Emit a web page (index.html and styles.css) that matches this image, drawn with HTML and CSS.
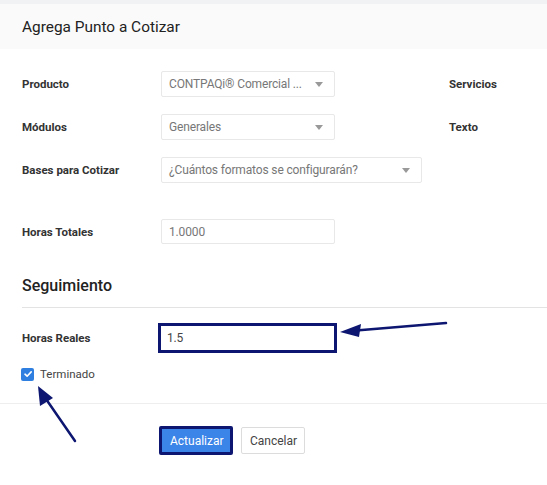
FILE: index.html
```html
<!DOCTYPE html>
<html lang="es">
<head>
<meta charset="utf-8">
<title>Agrega Punto a Cotizar</title>
<link rel="stylesheet" href="styles.css">
</head>
<body>
<div class="page">
  <div class="strip"></div>
  <div class="header"><h1 class="title">Agrega Punto a Cotizar</h1></div>
  <div class="form">
    <div class="row row-first">
      <div class="label">Producto</div>
      <div class="select w174"><span class="val">CONTPAQi® Comercial ...</span><span class="caret"></span></div>
      <div class="side-label">Servicios</div>
    </div>
    <div class="row">
      <div class="label">Módulos</div>
      <div class="select w174"><span class="val">Generales</span><span class="caret"></span></div>
      <div class="side-label">Texto</div>
    </div>
    <div class="row">
      <div class="label">Bases para Cotizar</div>
      <div class="select w261"><span class="val">¿Cuántos formatos se configurarán?</span><span class="caret"></span></div>
    </div>
    <div class="row row-totales">
      <div class="label">Horas Totales</div>
      <div class="input w174"><span class="val">1.0000</span></div>
    </div>
    <h2 class="section">Seguimiento</h2>
  </div>
  <div class="rule"></div>
  <div class="form">
    <div class="row row-reales">
      <div class="label label-reales">Horas Reales</div>
      <div class="input input-hl"><span class="val dark">1.5</span></div>
    </div>
    <div class="check-row">
      <span class="checkbox"><svg width="12" height="12" viewBox="0 0 12 12"><path d="M3 6.2 L5.1 8.2 L9.2 3.9" fill="none" stroke="#fff" stroke-width="1.6" stroke-linecap="round" stroke-linejoin="round"/></svg></span>
      <span class="check-label">Terminado</span>
    </div>
  </div>
  <div class="footer">
    <button class="btn btn-primary">Actualizar</button>
    <button class="btn btn-default">Cancelar</button>
  </div>
  <svg class="arrows" width="547" height="485" viewBox="0 0 547 485">
    <line x1="446" y1="323" x2="356" y2="330.5" stroke="#0d1670" stroke-width="2.5" stroke-linecap="round"/>
    <polygon points="340,332 361,324 359,337" fill="#0d1670"/>
    <line x1="75" y1="441" x2="46" y2="399" stroke="#0d1670" stroke-width="2.5" stroke-linecap="round"/>
    <polygon points="38,386 40,406 53,398" fill="#0d1670"/>
  </svg>
</div>
</body>
</html>
```
FILE: styles.css
```css
* { box-sizing: border-box; }
html, body { margin: 0; padding: 0; background: #fff; }
body { font-family: Roboto, "Liberation Sans", Arial, sans-serif; color: #333; }
.page { position: relative; width: 547px; height: 485px; overflow: hidden; }
.strip { height: 4px; background: #f1f2f4; }
.header { height: 45px; background: #fafafa; padding-left: 22px; display: flex; align-items: center; }
.title { margin: 0; font-size: 15.4px; font-weight: 400; color: #222; }
.form { padding-left: 22px; }
.row { display: flex; align-items: center; height: 26px; margin-top: 17px; }
.row.row-first { margin-top: 22px; }
.label { width: 139px; font-size: 11.5px; font-weight: 700; color: #333; }
.side-label { margin-left: 114px; font-size: 11.5px; font-weight: 700; color: #333; }
.select, .input { height: 26px; border: 1px solid #e8e8e8; border-radius: 2px; display: flex; align-items: center; justify-content: space-between; padding: 0 10px 0 7px; background: #fff; }
.w174 { width: 174px; }
.w261 { width: 261px; }
.val { font-size: 12px; letter-spacing: -0.15px; color: #777; white-space: nowrap; }
.val.dark { color: #444; }
.caret { width: 0; height: 0; border-left: 4px solid transparent; border-right: 4px solid transparent; border-top: 5px solid #999; margin-right: 1px; }
.row-totales { margin-top: 36px; height: 25px; }
.row-totales .input { height: 25px; }
.section { margin: 31px 0 0; font-size: 16px; font-weight: 500; color: #222; height: 22px; line-height: 22px; }
.rule { margin: 10px 0 0 22px; height: 1px; background: #e3e3e3; }
.row-reales { margin-top: 15px; height: 30px; }
.label-reales { width: 136px; }
.input-hl { width: 179px; height: 30px; border: 3px solid #0d1670; border-radius: 0; padding-left: 6px; }
.check-row { display: flex; align-items: center; margin-top: 14px; height: 14px; }
.checkbox { width: 13px; height: 13px; background: #2f7fe0; border-radius: 2px; display: inline-flex; align-items: center; justify-content: center; margin-left: -1px; }
.check-label { margin-left: 6px; font-size: 11.5px; color: #444; }
.footer { margin-top: 22px; border-top: 1px solid #eeeeee; padding: 22px 0 0 159px; display: flex; gap: 8px; }
.btn { font-family: Roboto, "Liberation Sans", Arial, sans-serif; font-size: 12px; height: 29px; padding: 0 8px; border-radius: 2px; cursor: pointer; }
.btn-primary { background: #3b84e8; color: #fff; border: 3px solid #0d1670; width: 74px; }
.btn-default { background: #fff; color: #444; border: 1px solid #dcdcdc; height: 27px; margin-top: 1px; width: 64px; }
.arrows { position: absolute; left: 0; top: 0; pointer-events: none; }
```
